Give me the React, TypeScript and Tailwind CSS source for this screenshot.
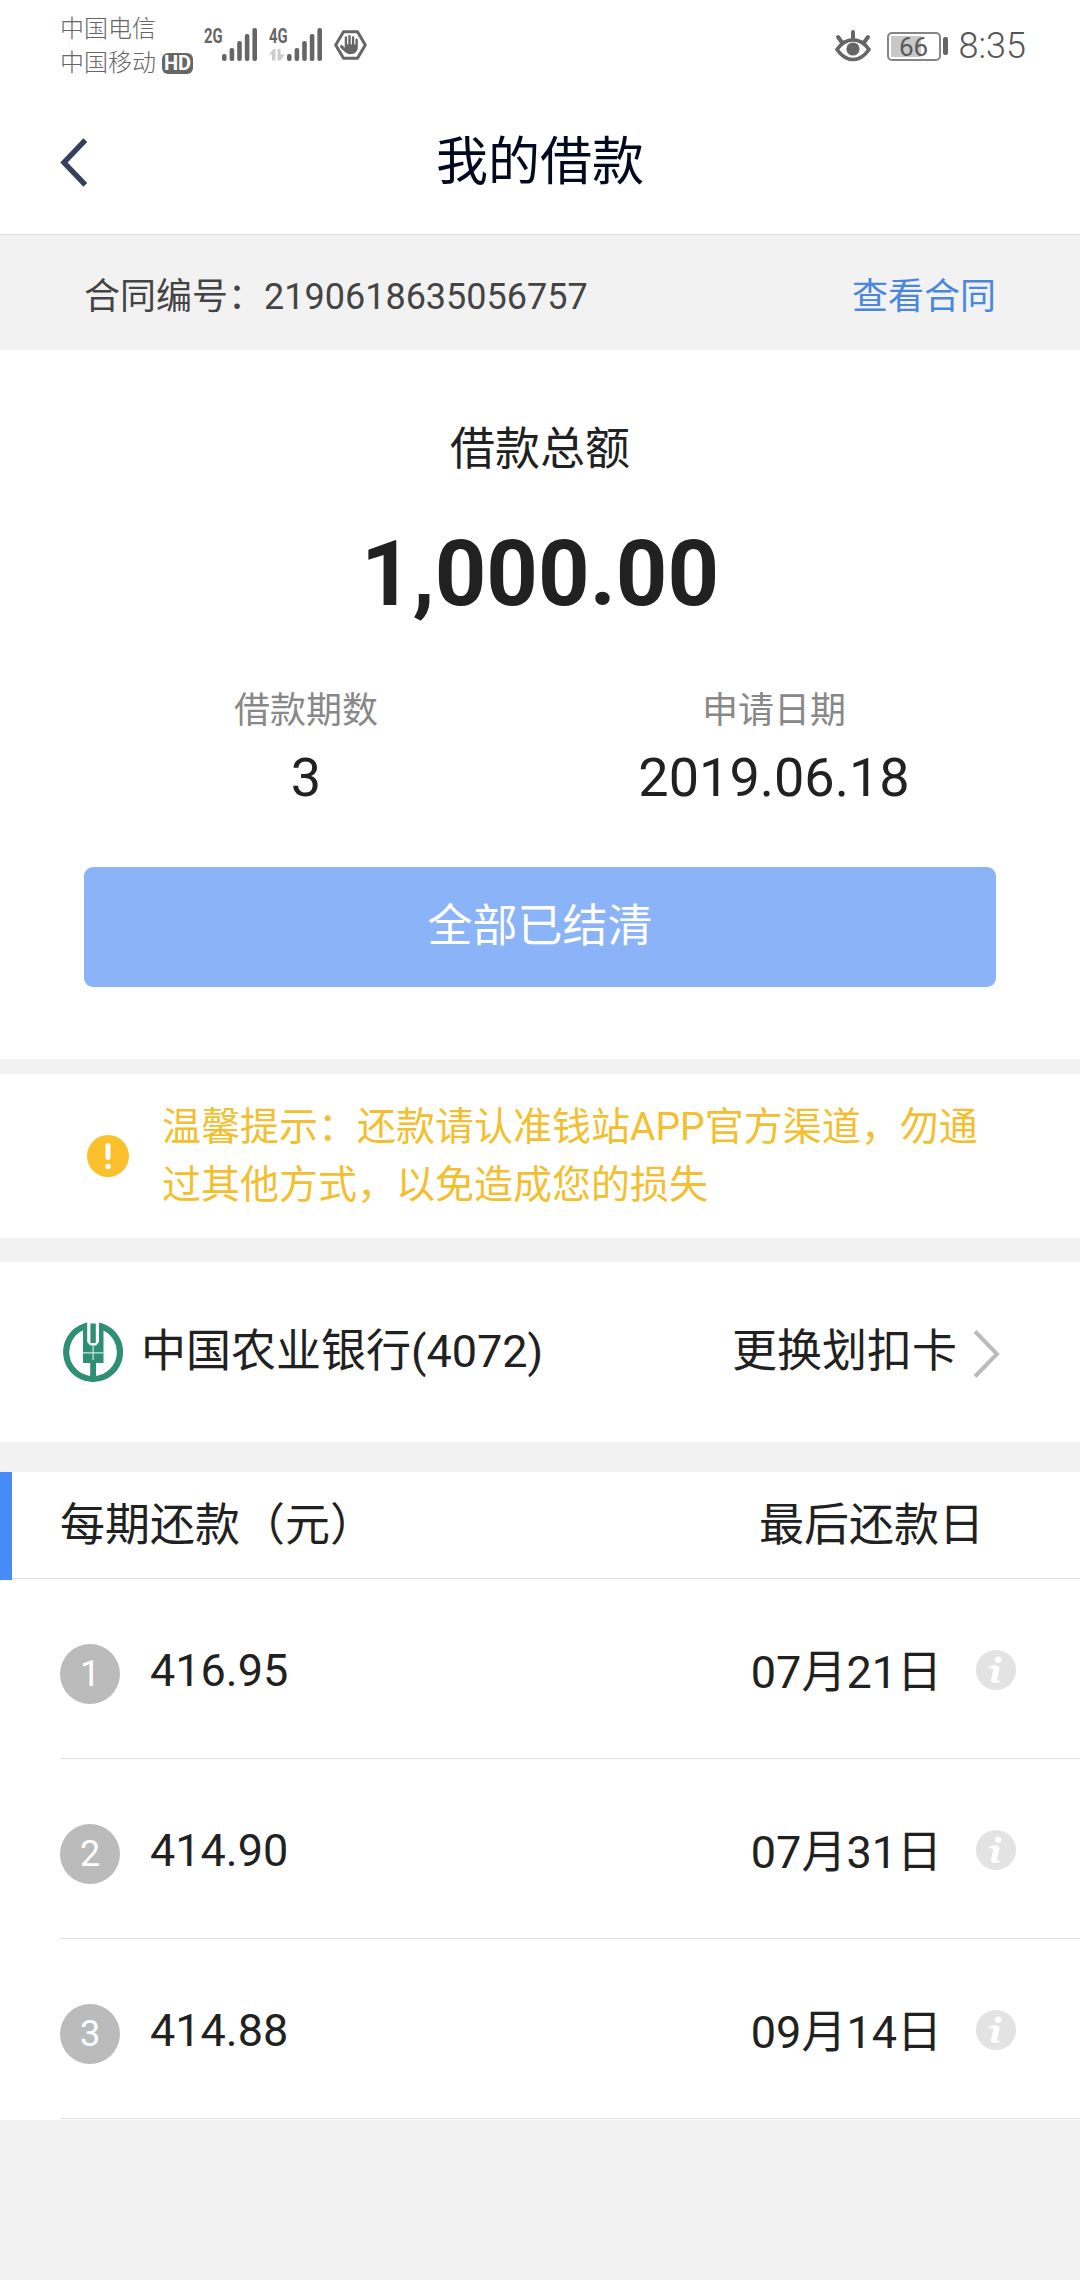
import { FaHand } from 'react-icons/fa6';

const signalBars = [
  { x: 0, y: 26, h: 7 },
  { x: 7.6, y: 20, h: 13 },
  { x: 15.2, y: 13, h: 20 },
  { x: 22.8, y: 6, h: 27 },
  { x: 30.4, y: 0, h: 33 },
];

const repayments = [
  { index: 1, amount: '416.95', date: '07月21日' },
  { index: 2, amount: '414.90', date: '07月31日' },
  { index: 3, amount: '414.88', date: '09月14日' },
];

function Signal({ type, arrows, className }: any) {
  return (
    <div className={`flex items-end ${className}`}>
      <div className="flex h-[33px] w-[18px] flex-col justify-between">
        <span className="origin-left scale-x-[0.74] text-[20px] leading-[16px] font-bold">
          {type}
        </span>
        {arrows && (
          <svg className="h-[12px] w-[16px]" viewBox="0 0 16 12" fill="#ccc">
            <path d="M0 5.500 4.500 0h2v11.500H3v-6zM8.500 0h3v5.500H16L11.500 11.500h-3z" />
          </svg>
        )}
      </div>
      <svg className="h-[33px] w-[35px]" viewBox="0 0 35 33" fill="#666">
        {signalBars.map((bar) => (
          <rect
            key={bar.x}
            x={bar.x}
            y={bar.y}
            width="4.6"
            height={bar.h}
            rx="2"
          />
        ))}
      </svg>
    </div>
  );
}

function HexHand() {
  return (
    <div className="relative ml-3 h-[30px] w-[33px]">
      <svg
        className="h-[30px] w-[33px]"
        viewBox="0 0 33 30"
        fill="none"
        stroke="#666"
        strokeWidth="3"
        strokeLinejoin="round"
      >
        <path d="M9.500 1.800h14L31.300 15l-7.800 13.200h-14L1.700 15z" />
      </svg>
      <FaHand className="absolute top-[5px] left-[6px] h-[19px] w-[19px] text-[#666]" />
    </div>
  );
}

function EyeIcon() {
  return (
    <svg
      className="h-[32px] w-[36px]"
      viewBox="0 0 36 32"
      fill="none"
      stroke="#666"
      strokeLinecap="round"
      strokeLinejoin="round"
    >
      <path
        d="M2 19.500C6.500 13 11.500 9.800 18 9.800s11.500 3.200 16 9.700c-4.500 6.500-9.500 10-16 10s-11.500-3.500-16-10z"
        strokeWidth="3.700"
      />
      <circle cx="18" cy="19" r="6.600" fill="#666" stroke="none" />
      <path d="M18 2v7M3 7l4 5.500M33 7l-4 5.500" strokeWidth="4" />
    </svg>
  );
}

function Battery() {
  return (
    <div className="flex items-center">
      <div className="flex h-[29px] w-[54px] rounded-[5px] border-2 border-[#858585] p-[2px]">
        <div className="relative flex w-full">
          <div className="h-full w-[66%] bg-[#c8c8c8]" />
          <span className="absolute inset-0 text-center text-[26px] leading-[22px] text-[#5a5a5a]">
            66
          </span>
        </div>
      </div>
      <div className="ml-[2px] h-[18px] w-[5px] rounded-[2px] bg-[#666]" />
    </div>
  );
}

function StatusBar() {
  return (
    <div className="flex h-[92px] items-start justify-between pr-[54px] pl-[60px] text-[#666]">
      <div className="flex items-start">
        <div className="flex flex-col pt-3 text-[24px] leading-[34px] font-light">
          <span>中国电信</span>
          <div className="flex items-center">
            中国移动
            <span className="ml-[6px] flex h-[21px] w-[31px] items-center justify-center rounded-[6px] bg-[#666] text-[20px] leading-none font-bold text-white">
              HD
            </span>
          </div>
        </div>
        <div className="flex items-center pt-[28px]">
          <Signal type="2G" className="ml-[11px]" />
          <Signal type="4G" arrows className="ml-[12px]" />
          <HexHand />
        </div>
      </div>
      <div className="flex items-center pt-[24px]">
        <EyeIcon />
        <div className="ml-4">
          <Battery />
        </div>
        <span className="ml-[11px] text-[36px] leading-[44px] font-light text-[#555]">
          8:35
        </span>
      </div>
    </div>
  );
}

function NavHeader() {
  return (
    <div className="grid h-[143px] grid-cols-[1fr_auto_1fr] items-center border-b border-[#dcdcdc] px-[60px]">
      <svg
        className="h-[50px] w-[28px]"
        viewBox="0 0 28 50"
        fill="none"
        stroke="#373f61"
        strokeWidth="5.400"
      >
        <path d="M25.300 2.200 4 24.500l21.300 22.300" />
      </svg>
      <h1 className="text-[52px] leading-[60px] text-[#030a20]">我的借款</h1>
    </div>
  );
}

function LoanSummary() {
  return (
    <div className="bg-white pt-[70px] pb-[72px] text-center text-[#212121]">
      <p className="text-[45px] leading-[60px]">借款总额</p>
      <p className="mt-[41px] text-[90px] leading-[108px] font-bold">1,000.00</p>
      <div className="mt-[57px] grid grid-cols-2 px-[72px]">
        <div>
          <p className="text-[36px] leading-[50px] text-[#888]">借款期数</p>
          <p className="mt-[10px] text-[54px] leading-[64px]">3</p>
        </div>
        <div>
          <p className="text-[36px] leading-[50px] text-[#888]">申请日期</p>
          <p className="mt-[10px] text-[54px] leading-[64px]">2019.06.18</p>
        </div>
      </div>
      <div className="mt-[57px] px-[84px]">
        <button className="h-[120px] w-full rounded-[9px] bg-[#8ab3f8] text-[45px] text-white">
          全部已结清
        </button>
      </div>
    </div>
  );
}

function Notice() {
  return (
    <div className="mt-[15px] flex h-[164px] items-center bg-white pr-[84px] pl-[87px]">
      <svg className="h-[42px] w-[42px] shrink-0" viewBox="0 0 42 42">
        <circle cx="21" cy="21" r="21" fill="#fbc02a" />
        <rect x="18.500" y="8" width="5" height="17" rx="2.500" fill="#fff" />
        <circle cx="21" cy="31.500" r="2.700" fill="#fff" />
      </svg>
      <p className="ml-[33px] text-[39px] leading-[58px] text-[#f3bf30]">
        温馨提示：还款请认准钱站APP官方渠道，勿通
        <br />
        过其他方式，以免造成您的损失
      </p>
    </div>
  );
}

function BankLogo() {
  return (
    <svg className="h-[60px] w-[60px]" viewBox="0 0 60 60" fill="#2f8f74">
      <path d="M24.200 .600A30 30 0 1 0 36 .600V20l-3 3.500h-5.600l-3.200-3.500z M20 8.200V41h7.200v13A24.200 24.200 0 0 1 20 8.200zM40.500 8.400V41H33v13a24.200 24.200 0 0 0 7.500-45.600z" fillRule="evenodd" />
      <rect x="27.400" y="1.500" width="5.400" height="19.500" />
      <path d="M20 30.800h20.500M30.100 24v14" stroke="#cfe8df" strokeWidth="1.200" />
    </svg>
  );
}

function BankCard() {
  return (
    <div className="mt-6 flex h-[180px] items-center bg-white pr-[80px] pl-[63px] text-[45px] leading-[60px] text-[#212121]">
      <BankLogo />
      <span className="ml-[18px]">中国农业银行(4072)</span>
      <span className="ml-auto">更换划扣卡</span>
      <svg
        className="mt-1 ml-4 h-[48px] w-[27px]"
        viewBox="0 0 27 48"
        fill="none"
        stroke="#bbb"
        strokeWidth="4"
      >
        <path d="M2 1.500 24 24 2 46.500" />
      </svg>
    </div>
  );
}

function InfoIcon() {
  return (
    <svg className="ml-[34px] h-10 w-10" viewBox="0 0 40 40">
      <circle cx="20" cy="20" r="20" fill="#e3e3e3" />
      <circle cx="22.200" cy="9.800" r="3.200" fill="#fff" />
      <path
        d="M12.500 17.500c2-1.500 4-2.200 6.500-2.200 3.500 0 5 1.500 4.300 4.500l-2.300 9.500c-.3 1.200.2 1.500 2.800 1.500v1.200c-1.500.8-3 1-4.800 1-3 0-4.500-1.500-3.800-4.300l2-8.500c.3-1.500-.5-2-4.700-1.800z"
        fill="#fff"
      />
    </svg>
  );
}

function RepaymentList() {
  return (
    <div className="mt-[30px] bg-white pb-px text-[45px] leading-[60px] text-[#212121]">
      <div className="flex h-[107px]">
        <div className="h-[108px] w-3 bg-[#478bf9]" />
        <div className="flex flex-1 items-center justify-between border-b border-[#dfdfdf] pt-[2px] pr-24 pl-12">
          <span>每期还款（元）</span>
          <span>最后还款日</span>
        </div>
      </div>
      {repayments.map((item) => (
        <div
          key={item.index}
          className="ml-[60px] flex h-[180px] items-center border-b border-[#dfdfdf] pt-[3px] pr-16"
        >
          <span className="mt-2 flex h-[60px] w-[60px] items-center justify-center rounded-full bg-[#bbb] text-[36px] text-white">
            {item.index}
          </span>
          <span className="mt-[2px] ml-[30px]">{item.amount}</span>
          <span className="mt-[6px] ml-auto">{item.date}</span>
          <InfoIcon />
        </div>
      ))}
    </div>
  );
}

export default function App() {
  return (
    <div className="min-h-[2280px] w-[1080px] bg-[#f2f2f2] font-['Roboto','Noto_Sans_CJK_SC',sans-serif]">
      <div className="bg-white">
        <StatusBar />
        <NavHeader />
      </div>
      <div className="flex h-[115px] items-center justify-between px-[84px] pt-2 text-[36px] leading-[50px]">
        <span className="text-[#444]">合同编号：2190618635056757</span>
        <a className="text-[#4a87dc]">查看合同</a>
      </div>
      <LoanSummary />
      <Notice />
      <BankCard />
      <RepaymentList />
    </div>
  );
}
